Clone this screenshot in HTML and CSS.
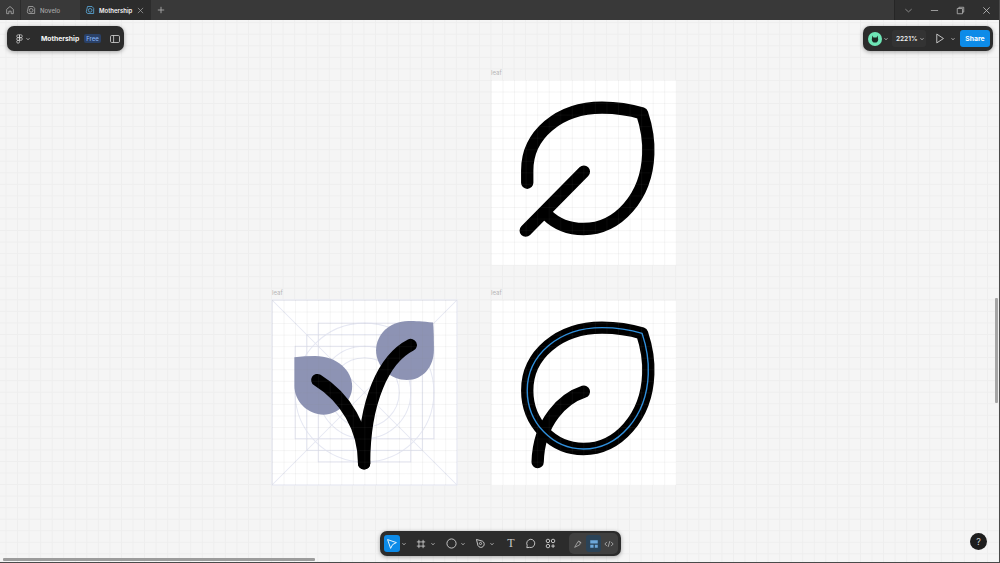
FILE: index.html
```html
<!DOCTYPE html>
<html lang="en">
<head>
<meta charset="utf-8">
<title>Mothership</title>
<link rel="stylesheet" href="styles.css">
</head>
<body>
<svg class="defs" width="0" height="0" aria-hidden="true">
  <symbol id="caret" viewBox="0 0 6 6"><path d="M1.500 2.200 3 3.800 4.500 2.200" fill="none" stroke="currentColor" stroke-width=".9"/></symbol>
  <symbol id="tabfile" viewBox="0 0 12 12"><path d="M3 1.800h5.500L10.400 4v6.200H3.500A2.200 2.200 0 0 1 1.600 8Z" fill="none" stroke="currentColor" stroke-width="1"/><circle cx="6.200" cy="6.400" r="2.200" fill="none" stroke="currentColor" stroke-width="1"/></symbol>
</svg>
<div class="window">
  <header class="titlebar">
    <div class="home">
      <svg viewBox="0 0 12 12" width="10" height="10"><path d="M2 5.200 6 1.800l4 3.400V10.400H7.400V7.400H4.600v3H2Z" fill="none" stroke="#a8a8a8" stroke-width="1"/></svg>
    </div>
    <div class="tab">
      <svg class="tab-ico ico-muted" viewBox="0 0 12 12"><use href="#tabfile"/></svg>
      <span class="tab-name muted">Novelo</span>
    </div>
    <div class="tab tab-active">
      <svg class="tab-ico ico-blue" viewBox="0 0 12 12"><use href="#tabfile"/></svg>
      <span class="tab-name">Mothership</span>
      <svg class="tab-close" viewBox="0 0 8 8"><path d="M1 1l6 6M7 1 1 7" stroke="#a8a8a8" stroke-width=".8"/></svg>
    </div>
    <div class="plus">
      <svg viewBox="0 0 8 8" width="8" height="8"><path d="M4 .8v6.400M.8 4h6.400" stroke="#a8a8a8" stroke-width=".9"/></svg>
    </div>
    <div class="win-controls">
      <svg class="win-ico" viewBox="0 0 10 10"><path d="M1.500 3.500 5 6.500l3.500-3" fill="none" stroke="#9a9a9a" stroke-width=".9"/></svg>
      <svg class="win-ico" viewBox="0 0 10 10"><path d="M1 5h8" stroke="#b5b5b5" stroke-width=".9"/></svg>
      <svg class="win-ico" viewBox="0 0 10 10"><path d="M3.200 2.800V1.400h5.400v5.400H7.200M1.400 2.800h5.800v5.800H1.400Z" fill="none" stroke="#b5b5b5" stroke-width=".9"/></svg>
      <svg class="win-ico" viewBox="0 0 10 10"><path d="M1.500 1.500l7 7M8.500 1.500l-7 7" stroke="#c5c5c5" stroke-width=".9"/></svg>
    </div>
  </header>

  <main class="canvas">
    <span class="frame-label label-a">leaf</span>
    <span class="frame-label label-b">leaf</span>
    <span class="frame-label label-c">leaf</span>

    <section class="frame frame-a">
      <svg class="art" viewBox="0 0 24 24">
        <g transform="translate(0 .13)">
          <path class="ink" d="M4.700 13.200V11.600C4.700 7 8.800 3.450 14.400 3.450C16.200 3.450 18 3.700 19.600 4.200C20.200 6 20.500 7.500 20.400 9.500C20.200 15 16.500 19.200 12 19.200C10 19.200 8.400 18.500 7.200 17.300"/>
          <path class="ink" d="M12.050 11.760 4.500 19.400"/>
        </g>
      </svg>
    </section>

    <section class="frame frame-b">
      <svg class="art" viewBox="0 0 24 24">
        <g class="guides">
          <rect x="0" y="0" width="24" height="24"/>
          <path d="M0 0 24 24M24 0 0 24"/>
          <rect x="6" y="3" width="12" height="18"/>
          <rect x="4.500" y="4.500" width="15" height="15"/>
          <rect x="3" y="6" width="18" height="12"/>
          <circle cx="12" cy="12" r="9"/>
          <circle cx="12" cy="12" r="6"/>
          <circle cx="12" cy="12" r="4.500"/>
        </g>
        <g transform="translate(0 .13)">
          <path class="petal" d="M20.900 2.800C19.500 2.650 18.600 2.600 17.700 2.600C15.200 2.600 13.500 4.400 13.500 6.400C13.500 8.600 15.400 10.260 17.500 10.260C19.600 10.260 21 8.500 21 6.400C21 5 21 4 20.900 2.800Z"/>
          <path class="petal" d="M2.900 7.300C3.800 7.200 4.700 7.140 5.600 7.140C8.400 7.140 10.400 9 10.400 11.100C10.400 13 8.600 14.750 6.700 14.750C4.600 14.750 2.900 13 2.900 11Z"/>
          <path class="ink" d="M5.880 10.260C9.500 12.500 11.950 16.500 11.950 21.070"/>
          <path class="ink" d="M18 5.710C14.500 7.500 11.950 13 11.950 21.070"/>
        </g>
      </svg>
    </section>

    <section class="frame frame-c">
      <svg class="art" viewBox="0 0 24 24">
        <g transform="translate(0 .13)">
          <path class="ink" d="M19.600 4.200C18 3.700 16.200 3.450 14.400 3.450C8.800 3.450 4.700 7 4.700 11.600C4.700 15.800 8 19.200 12 19.200C16.500 19.200 20.200 15 20.400 9.500C20.500 7.500 20.200 6 19.600 4.200Z"/>
          <path class="ink" d="M12.050 11.760C9.500 12.600 6.200 15.500 6.050 20.900"/>
          <path class="sel" d="M19.600 4.200C18 3.700 16.200 3.450 14.400 3.450C8.800 3.450 4.700 7 4.700 11.600C4.700 15.800 8 19.200 12 19.200C16.500 19.200 20.200 15 20.400 9.500C20.500 7.500 20.200 6 19.600 4.200Z"/>
        </g>
      </svg>
    </section>

    <div class="panel panel-left">
      <svg class="logo" viewBox="0 0 10 14"><path d="M5 1H3a2 2 0 0 0 0 4h2ZM5 1h2a2 2 0 0 1 0 4H5ZM5 5H3a2 2 0 0 0 0 4h2ZM5 9H3a2 2 0 1 0 2 2ZM9 7a2 2 0 1 1-4 0 2 2 0 0 1 4 0Z" fill="none" stroke="#e8e8e8" stroke-width=".9"/></svg>
      <svg class="caret" viewBox="0 0 6 6"><use href="#caret"/></svg>
      <span class="file-name">Mothership</span>
      <span class="badge">Free</span>
      <svg class="sidebar-ico" viewBox="0 0 10 8"><rect x=".5" y=".5" width="9" height="7" rx="1.200" fill="none" stroke="#d8d8d8" stroke-width=".8"/><path d="M3.600.5v7" stroke="#d8d8d8" stroke-width=".8"/></svg>
    </div>

    <div class="panel panel-right">
      <svg class="avatar" viewBox="0 0 14 14"><circle cx="7" cy="7" r="7" fill="#6ee5b6"/><path d="M4.400 3.400l1 2h3.200l1-2 .6 4A3.300 3.300 0 0 1 7 10.600 3.300 3.300 0 0 1 3.800 7.400Z" fill="#1d2a25"/></svg>
      <svg class="caret" viewBox="0 0 6 6"><use href="#caret"/></svg>
      <div class="zoom-box">
        <span class="zoom-val">2221%</span>
        <svg class="caret" viewBox="0 0 6 6"><use href="#caret"/></svg>
      </div>
      <svg class="play" viewBox="0 0 10 12"><path d="M1.500 1.200 8.800 6l-7.300 4.800Z" fill="none" stroke="#e0e0e0" stroke-width=".9"/></svg>
      <svg class="caret" viewBox="0 0 6 6"><use href="#caret"/></svg>
      <span class="share">Share</span>
    </div>

    <nav class="toolbar">
      <span class="tool tool-on">
        <svg viewBox="0 0 12 12" width="12" height="12"><path d="M1.600 1.600 10.400 4.600 6.600 6.600 4.600 10.400Z" fill="none" stroke="#fff" stroke-width=".9" stroke-linejoin="round"/></svg>
      </span>
      <svg class="caret caret-a" viewBox="0 0 6 6"><use href="#caret"/></svg>
      <span class="tool tool-b">
        <svg viewBox="0 0 12 12" width="10" height="10"><path d="M3.500 1v10M8.500 1v10M1 3.500h10M1 8.500h10" stroke="#e2e2e2" stroke-width=".9"/></svg>
      </span>
      <svg class="caret caret-a" viewBox="0 0 6 6"><use href="#caret"/></svg>
      <span class="tool tool-c">
        <svg viewBox="0 0 12 12" width="11" height="11"><circle cx="6" cy="6" r="5" fill="none" stroke="#e2e2e2" stroke-width=".9"/></svg>
      </span>
      <svg class="caret caret-a" viewBox="0 0 6 6"><use href="#caret"/></svg>
      <span class="tool tool-d">
        <svg viewBox="0 0 12 12" width="11" height="11"><path d="M1.600 1.600 8 3.400a3.600 3.600 0 1 1-4.800 4.800Z" fill="none" stroke="#e2e2e2" stroke-width=".9"/><circle cx="6" cy="6" r="1.200" fill="none" stroke="#e2e2e2" stroke-width=".8"/></svg>
      </span>
      <svg class="caret caret-a" viewBox="0 0 6 6"><use href="#caret"/></svg>
      <span class="tool tool-t">T</span>
      <span class="tool tool-e">
        <svg viewBox="0 0 12 12" width="11" height="11"><path d="M6.200 1.400a4.500 4.500 0 1 1-1.400 8.800L2 10.600l.4-2.600A4.500 4.500 0 0 1 6.200 1.400Z" fill="none" stroke="#e2e2e2" stroke-width=".9"/></svg>
      </span>
      <span class="tool tool-f">
        <svg viewBox="0 0 12 12" width="11" height="11"><g fill="none" stroke="#e2e2e2" stroke-width=".9"><circle cx="3.200" cy="3.200" r="1.900"/><circle cx="8.800" cy="3.200" r="1.900"/><circle cx="3.200" cy="8.800" r="1.900"/><path d="M8.800 6.800v4M6.800 8.800h4"/></g></svg>
      </span>
      <div class="mode-group">
        <span class="mode">
          <svg viewBox="0 0 12 12" width="10" height="10"><path d="M2 10 6 3l3 1-1 3-6 3ZM7 2l3 3" fill="none" stroke="#b8b8b8" stroke-width=".9"/></svg>
        </span>
        <span class="mode mode-on">
          <svg viewBox="0 0 12 12" width="10" height="10"><path d="M1.500 1.500h9v4h-9ZM1.500 7h4v3.500h-4ZM7 7h3.500v3.500H7Z" fill="#6ea8da"/></svg>
        </span>
        <span class="mode">
          <svg viewBox="0 0 12 12" width="10" height="10"><path d="M3.500 3.500 1 6l2.500 2.500M8.500 3.500 11 6 8.500 8.500M7 2.500 5 9.500" fill="none" stroke="#c0c0c0" stroke-width=".9"/></svg>
        </span>
      </div>
    </nav>

    <span class="help">?</span>
    <span class="scroll-v"></span>
    <span class="scroll-h"></span>
  </main>
</div>
</body>
</html>
```
FILE: styles.css
```css
* { box-sizing: border-box; }
html, body { margin: 0; height: 100%; overflow: hidden; }
body { font-family: Inter, "Liberation Sans", sans-serif; background: #444; }
.defs { position: absolute; }

.window {
  width: 1000px;
  height: 563px;
  display: flex;
  flex-direction: column;
  border-right: 1px solid #4a4a4a;
  border-bottom: 1px solid #4a4a4a;
}

/* title bar */
.titlebar { height: 20px; flex: none; display: flex; background: #393939; }
.home {
  width: 21px;
  display: flex;
  align-items: center;
  justify-content: center;
  border-right: 1px solid #2c2c2c;
}
.tab {
  width: 59px;
  display: flex;
  align-items: center;
  padding-left: 5px;
  gap: 4px;
}
.tab-active { width: 71px; padding-left: 5px; background: #2c2c2c; }
.tab-ico { width: 10px; height: 10px; }
.ico-muted { color: #a5a5a5; }
.ico-blue { color: #5aa7d8; }
.tab-name { font-size: 6px; font-weight: 600; color: #f2f2f2; }
.tab-name.muted { color: #a8a8a8; font-weight: 500; }
.tab-close { width: 7px; height: 7px; margin-left: auto; margin-right: 7px; }
.plus { width: 20px; display: flex; align-items: center; justify-content: center; }
.win-controls {
  margin-left: auto;
  width: 105px;
  display: flex;
  align-items: center;
  padding-left: 9px;
  gap: 17px;
  background: #2f2f2f;
  border-left: 1px solid #262626;
}
.win-ico { width: 9px; height: 9px; }

/* canvas */
.canvas {
  position: relative;
  flex: 1;
  overflow: hidden;
  background-color: #f5f5f5;
  background-image:
    linear-gradient(to right, #eeeeee 1px, transparent 1px),
    linear-gradient(to bottom, #eeeeee 1px, transparent 1px);
  background-size: 11.56px 11.56px;
  background-position: 5.5px 2.2px;
}
.frame {
  position: absolute;
  width: 185px;
  height: 185px;
  background-color: #fff;
}
.frame::after {
  content: "";
  position: absolute;
  inset: 0;
  background-image:
    linear-gradient(to right, rgba(128, 128, 128, .08) 1px, transparent 1px),
    linear-gradient(to bottom, rgba(128, 128, 128, .08) 1px, transparent 1px);
  background-size: 11.56px 11.56px;
}
.frame-a { left: 491px; top: 60px; }
.frame-b { left: 272px; top: 280px; }
.frame-c { left: 491px; top: 280px; }
.art { display: block; width: 100%; height: 100%; overflow: visible; }
.ink { fill: none; stroke: #000; stroke-width: 1.6; stroke-linecap: round; stroke-linejoin: round; }
.sel { fill: none; stroke: #2f8fdc; stroke-width: .18; stroke-linejoin: round; }
.petal { fill: #8d93b4; }
.guides { fill: none; stroke: #e6e8f3; stroke-width: .13; }
.frame-label { position: absolute; font-size: 6px; color: #b5b5b5; line-height: 8px; }
.label-a { left: 491px; top: 49px; }
.label-b { left: 272px; top: 269px; }
.label-c { left: 491px; top: 269px; }

/* floating panels */
.panel, .toolbar {
  position: absolute;
  display: flex;
  align-items: center;
  background: #2c2c2c;
  border-radius: 7px;
  box-shadow: 0 1px 4px rgba(0, 0, 0, .35);
}
.caret { width: 6px; height: 6px; color: #b5b5b5; flex: none; }
.panel-left { left: 7px; top: 6px; width: 117px; height: 25px; padding-left: 9px; }
.logo { width: 7px; height: 10px; margin-right: 1px; }
.panel-left .caret { margin-left: 1px; }
.file-name { margin-left: 10px; font-size: 6.800px; font-weight: 700; color: #f5f5f5; }
.badge {
  margin-left: 5px;
  padding: 1px 2px;
  border-radius: 2px;
  background: #2a4168;
  color: #86b4f5;
  font-size: 6px;
  font-weight: 500;
  line-height: 7px;
}
.sidebar-ico { width: 10px; height: 8px; margin-left: 9px; }

.panel-right { left: 863px; top: 6px; width: 130px; height: 25px; padding-left: 5px; }
.avatar { width: 14px; height: 14px; }
.panel-right > .caret { margin-left: 1px; }
.zoom-box {
  margin-left: 3px;
  width: 34px;
  height: 17px;
  padding-left: 4px;
  display: flex;
  align-items: center;
  gap: 2px;
  border-radius: 3px;
  background: #333;
}
.zoom-val { font-size: 6.500px; font-weight: 600; color: #f0f0f0; }
.play { width: 10px; height: 11px; margin-left: 9px; }
.panel-right > .play + .caret { margin-left: 5px; }
.share {
  margin-left: 4px;
  width: 30px;
  height: 17px;
  border-radius: 3px;
  background: #0d8be8;
  color: #fff;
  font-size: 6.800px;
  font-weight: 700;
  line-height: 17px;
  text-align: center;
}

/* toolbar */
.toolbar { left: 380px; top: 511px; width: 241px; height: 25px; padding-left: 4px; }
.tool { display: flex; align-items: center; justify-content: center; height: 17px; width: 16px; flex: none; }
.tool-on { background: #0d8be8; border-radius: 3px; }
.caret-a { margin-left: 1px; }
.tool-b { margin-left: 6px; }
.tool-c { margin-left: 7px; }
.tool-d { margin-left: 6px; }
.tool-t { margin-left: 8px; color: #c8c8c8; font-family: "Liberation Serif", serif; font-size: 12px; font-weight: 400; line-height: 17px; }
.tool-e { margin-left: 3px; }
.tool-f { margin-left: 4px; }
.mode-group {
  margin-left: 11px;
  width: 49px;
  height: 21px;
  border-radius: 5px;
  background: #404040;
  display: flex;
  align-items: center;
  justify-content: center;
  gap: 0;
}
.mode { width: 15.500px; height: 17px; display: flex; align-items: center; justify-content: center; border-radius: 3px; }
.mode-on { background: #2a4358; }

.help {
  position: absolute;
  left: 970px;
  top: 513px;
  width: 17px;
  height: 17px;
  border-radius: 50%;
  background: #1e1e1e;
  color: #d0d0d0;
  font-size: 9px;
  line-height: 17px;
  text-align: center;
}
.scroll-v { position: absolute; left: 995px; top: 278px; width: 3px; height: 105px; background: #a6a6a6; border-radius: 1px; }
.scroll-h { position: absolute; left: 3px; top: 538px; width: 312px; height: 3px; background: #9c9c9c; border-radius: 1px; }
```
